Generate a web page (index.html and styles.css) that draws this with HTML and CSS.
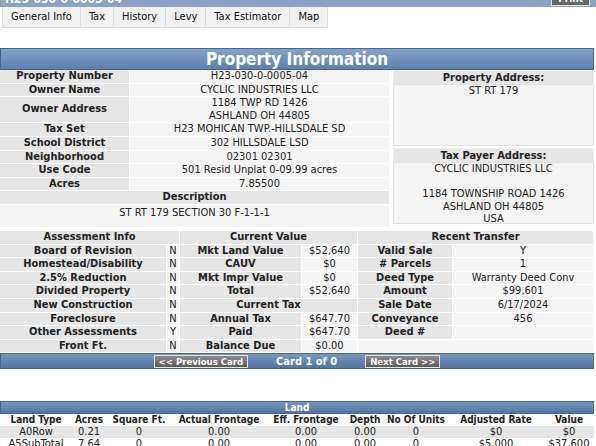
FILE: index.html
```html
<!DOCTYPE html>
<html lang="en">
<head>
    <meta charset="UTF-8">
    <meta name="viewport" content="width=device-width, initial-scale=1.0">
    <title>Parcel H23-030-0-0005-04</title>
    <link rel="stylesheet" href="styles.css">
</head>
<body>

<div class="topbar">
    <span class="parcel-id">H23-030-0-0005-04</span>
    <span class="print-btn">Print</span>
</div>

<ul class="tabs">
    <li>General Info</li>
    <li>Tax</li>
    <li>History</li>
    <li>Levy</li>
    <li>Tax Estimator</li>
    <li>Map</li>
</ul>

<div class="panel">
    <div class="panel-title">Property Information</div>

    <div class="prop-grid">
        <table class="info">
            <colgroup><col class="c-label"><col></colgroup>
            <tr><th>Property Number</th><td>H23-030-0-0005-04</td></tr>
            <tr><th>Owner Name</th><td>CYCLIC INDUSTRIES LLC</td></tr>
            <tr><th>Owner Address</th><td>1184 TWP RD 1426<br>ASHLAND OH 44805</td></tr>
            <tr><th>Tax Set</th><td>H23 MOHICAN TWP.-HILLSDALE SD</td></tr>
            <tr><th>School District</th><td>302 HILLSDALE LSD</td></tr>
            <tr><th>Neighborhood</th><td>02301 02301</td></tr>
            <tr><th>Use Code</th><td>501 Resid Unplat 0-09.99 acres</td></tr>
            <tr><th>Acres</th><td>7.85500</td></tr>
            <tr><th colspan="2">Description</th></tr>
            <tr><td colspan="2" class="desc">ST RT 179 SECTION 30 F-1-1-1</td></tr>
        </table>

        <div class="addresses">
            <div class="addr-head">Property Address:</div>
            <div class="addr-box addr-prop">ST RT 179</div>
            <div class="addr-head">Tax Payer Address:</div>
            <div class="addr-box">CYCLIC INDUSTRIES LLC<br><br>1184 TOWNSHIP ROAD 1426<br>ASHLAND OH 44805<br>USA</div>
        </div>
    </div>

    <table class="assess">
        <colgroup>
            <col class="a-label"><col class="a-flag">
            <col class="v-label"><col class="v-value">
            <col class="t-label"><col>
        </colgroup>
        <tr>
            <th colspan="2">Assessment Info</th>
            <th colspan="2">Current Value</th>
            <th colspan="2">Recent Transfer</th>
        </tr>
        <tr><th>Board of Revision</th><td>N</td><th>Mkt Land Value</th><td>$52,640</td><th>Valid Sale</th><td>Y</td></tr>
        <tr><th>Homestead/Disability</th><td>N</td><th>CAUV</th><td>$0</td><th># Parcels</th><td>1</td></tr>
        <tr><th>2.5% Reduction</th><td>N</td><th>Mkt Impr Value</th><td>$0</td><th>Deed Type</th><td>Warranty Deed Conv</td></tr>
        <tr><th>Divided Property</th><td>N</td><th>Total</th><td>$52,640</td><th>Amount</th><td>$99,601</td></tr>
        <tr><th>New Construction</th><td>N</td><th colspan="2">Current Tax</th><th>Sale Date</th><td>6/17/2024</td></tr>
        <tr><th>Foreclosure</th><td>N</td><th>Annual Tax</th><td>$647.70</td><th>Conveyance</th><td>456</td></tr>
        <tr><th>Other Assessments</th><td>Y</td><th>Paid</th><td>$647.70</td><th>Deed #</th><td></td></tr>
        <tr><th>Front Ft.</th><td>N</td><th>Balance Due</th><td>$0.00</td><td colspan="2"></td></tr>
    </table>

    <div class="card-nav">
        <span class="nav-btn">&lt;&lt; Previous Card</span>
        <span class="card-count">Card 1 of 0</span>
        <span class="nav-btn">Next Card &gt;&gt;</span>
    </div>
</div>

<div class="land">
    <div class="land-title">Land</div>
    <table class="land-table">
        <colgroup>
            <col style="width:72px"><col style="width:34px"><col style="width:66px">
            <col style="width:94px"><col style="width:80px"><col style="width:38px">
            <col style="width:64px"><col style="width:96px"><col>
        </colgroup>
        <tr>
            <th>Land Type</th><th>Acres</th><th>Square Ft.</th><th>Actual Frontage</th>
            <th>Eff. Frontage</th><th>Depth</th><th>No Of Units</th><th>Adjusted Rate</th><th>Value</th>
        </tr>
        <tr class="odd">
            <td>A0Row</td><td>0.21</td><td>0</td><td>0.00</td><td>0.00</td><td>0.00</td><td>0</td><td>$0</td><td>$0</td>
        </tr>
        <tr>
            <td>A5SubTotal</td><td>7.64</td><td>0</td><td>0.00</td><td>0.00</td><td>0.00</td><td>0</td><td>$5,000</td><td>$37,600</td>
        </tr>
    </table>
</div>

</body>
</html>
```

FILE: styles.css
```css
body {
    margin: 0;
    font-family: "DejaVu Sans Condensed", "DejaVu Sans", sans-serif;
    font-stretch: condensed;
    font-size: 11px;
    color: #222;
    background-color: #fff;
}
table {
    border-collapse: separate;
    border-spacing: 0;
    table-layout: fixed;
    width: 100%;
}
th, td {
    padding: 0;
    text-align: center;
    line-height: 12.6px;
    border-bottom: 1px solid #fff;
    border-right: 1px solid #fff;
}
th {
    background-color: #e6e6e6;
    font-weight: bold;
}
td {
    background-color: #f5f5f5;
}

/* header strip with parcel id */
.topbar {
    height: 7px;
    overflow: hidden;
    background-color: #8aa2c4;
    display: flex;
    justify-content: space-between;
    padding: 0 6px 0 5px;
}
.parcel-id {
    margin-top: -8px;
    color: #fff;
    font-weight: bold;
    font-size: 12px;
    line-height: 14px;
}
.print-btn {
    margin-top: -8px;
    height: 12px;
    padding: 0 6px;
    background-color: #666;
    border: 1px solid #ddd;
    color: #fff;
    font-weight: bold;
    font-size: 10px;
}

.tabs {
    list-style: none;
    margin: 0 0 20px 2px;
    padding: 0;
    display: flex;
}
.tabs li {
    height: 20px;
    line-height: 20px;
    padding: 0 8px;
    background-color: #f2f2f2;
    border: 1px solid #dcdcdc;
    border-top: none;
    border-left: none;
    font-size: 11px;
    color: #111;
}
.tabs li:first-child {
    border-left: 1px solid #dcdcdc;
}

.panel {
    width: 594px;
}
.panel-title {
    height: 20px;
    line-height: 20px;
    background: linear-gradient(#86a3c9, #5c7fac);
    border: 1px solid #45658f;
    color: #fff;
    font-size: 17px;
    font-weight: bold;
    text-align: center;
}

.prop-grid {
    display: grid;
    grid-template-columns: 390px 1fr;
    column-gap: 3px;
    align-items: start;
}
.info .c-label {
    width: 130px;
}
.info .desc {
    height: 20px;
    vertical-align: top;
    padding-top: 2px;
}

.addresses {
    display: flex;
    flex-direction: column;
}
.addr-head {
    background-color: #e6e6e6;
    font-weight: bold;
    text-align: center;
    line-height: 13px;
    border: 1px solid #f0f0f0;
    border-bottom: none;
}
.addr-box {
    background-color: #f5f5f5;
    border: 1px solid #e2e2e2;
    text-align: center;
    line-height: 12.6px;
    height: 60px;
}
.addr-prop {
    margin-bottom: 2px;
}

.assess {
    margin-top: 3px;
}
.assess .a-label { width: 167px; }
.assess .a-flag { width: 13px; }
.assess .v-label { width: 122px; }
.assess .v-value { width: 56px; }
.assess .t-label { width: 95px; }

.card-nav {
    height: 14px;
    background: linear-gradient(#7897c0, #52749f);
    border: 1px solid #46668f;
    display: flex;
    align-items: center;
    justify-content: center;
    gap: 28px;
}
.card-count {
    color: #fff;
    font-weight: bold;
    font-size: 11px;
}
.nav-btn {
    height: 11px;
    line-height: 11px;
    padding: 0 4px;
    background: linear-gradient(#8c8c8c, #5a5a5a);
    border: 1px solid #e6e6e6;
    color: #fff;
    font-weight: bold;
    font-size: 9.5px;
}

.land {
    margin-top: 32px;
    width: 594px;
}
.land-title {
    height: 11px;
    line-height: 11px;
    background: linear-gradient(#7897c0, #52749f);
    border: 1px solid #46668f;
    color: #fff;
    font-weight: bold;
    font-size: 10px;
    text-align: center;
}
.land-table th,
.land-table td {
    font-size: 11px;
    line-height: 12px;
    border: none;
}
.land-table th {
    background-color: #fff;
    font-size: 10px;
}
.land-table td {
    background-color: #fff;
}
.land-table .odd td {
    background-color: #e6e6e6;
}
```
